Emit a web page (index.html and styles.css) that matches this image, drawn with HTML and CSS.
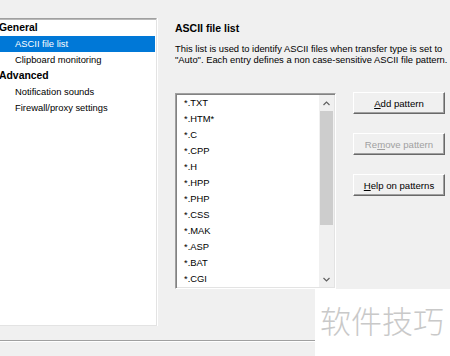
FILE: index.html
```html
<!DOCTYPE html>
<html lang="en">
<head>
    <meta charset="UTF-8">
    <meta name="viewport" content="width=device-width, initial-scale=1.0">
    <title>Options - ASCII file list</title>
    <link rel="stylesheet" href="styles.css">
</head>
<body>
    <div class="dialog">
        <div class="main">
            <div class="tree">
                <div class="node group">General</div>
                <div class="node child selected">ASCII file list</div>
                <div class="node child">Clipboard monitoring</div>
                <div class="node group">Advanced</div>
                <div class="node child">Notification sounds</div>
                <div class="node child">Firewall/proxy settings</div>
            </div>

            <div class="page">
                <h2>ASCII file list</h2>
                <p class="desc">This list is used to identify ASCII files when transfer type is set to<br>"Auto". Each entry defines a non case-sensitive ASCII file pattern.</p>

                <div class="content">
                    <div class="listbox">
                        <ul class="items">
                            <li>*.TXT</li>
                            <li>*.HTM*</li>
                            <li>*.C</li>
                            <li>*.CPP</li>
                            <li>*.H</li>
                            <li>*.HPP</li>
                            <li>*.PHP</li>
                            <li>*.CSS</li>
                            <li>*.MAK</li>
                            <li>*.ASP</li>
                            <li>*.BAT</li>
                            <li>*.CGI</li>
                        </ul>
                        <div class="scrollbar">
                            <div class="arrow">
                                <svg width="7" height="5" viewBox="0 0 7 5"><path d="M0.5 4 L3.5 1 L6.5 4" fill="none" stroke="#606060" stroke-width="1.2"/></svg>
                            </div>
                            <div class="track"><div class="thumb"></div></div>
                            <div class="arrow">
                                <svg width="7" height="5" viewBox="0 0 7 5"><path d="M0.5 1 L3.5 4 L6.5 1" fill="none" stroke="#606060" stroke-width="1.2"/></svg>
                            </div>
                        </div>
                    </div>

                    <div class="buttons">
                        <button class="btn"><u>A</u>dd pattern</button>
                        <button class="btn" disabled>Re<u>m</u>ove pattern</button>
                        <button class="btn"><u>H</u>elp on patterns</button>
                    </div>
                </div>
            </div>
        </div>
        <div class="footer"></div>
    </div>

    <div class="watermark">软件技巧</div>
</body>
</html>
```

FILE: styles.css
```css
* {
    margin: 0;
    padding: 0;
    box-sizing: border-box;
}

body {
    width: 450px;
    height: 356px;
    overflow: hidden;
    position: relative;
    background: #f0f0f0;
    color: #000;
    font-family: 'Liberation Sans', Arial, sans-serif;
    font-size: 9.4px;
}

.dialog {
    display: flex;
    flex-direction: column;
    padding-top: 18px;
}

.main {
    display: flex;
    align-items: flex-start;
}

/* Left navigation tree */
.tree {
    width: 157px;
    height: 308px;
    flex-shrink: 0;
    background: #fff;
    border-top: 1px solid #a0a0a0;
    border-right: 1px solid #e3e3e3;
    border-bottom: 1px solid #e3e3e3;
    box-shadow: inset 0 1px 0 #b9b9b9, 1px 0 0 #fff;
    padding-top: 1px;
    margin-right: 18px;
}

.node {
    height: 16px;
    line-height: 16px;
    white-space: nowrap;
}

.node.group {
    font-weight: bold;
    font-size: 10.4px;
    margin-left: -1px;
}

.node.child {
    padding-left: 15px;
}

.node.selected {
    background: #0078d7;
    color: #fff;
    margin-right: 1px;
}

/* Right settings page */
.page {
    flex: 1;
    white-space: nowrap;
    padding-top: 4px;
}

.page h2 {
    font-size: 10.5px;
    font-weight: bold;
    line-height: 12px;
}

.desc {
    margin-top: 9px;
    line-height: 11px;
}

.content {
    display: flex;
    align-items: flex-start;
    margin-top: 28px;
}

.listbox {
    width: 161px;
    height: 196px;
    display: flex;
    background: #fff;
    border-top: 1px solid #a0a0a0;
    border-left: 1px solid #a0a0a0;
    border-right: 1px solid #fff;
    border-bottom: 1px solid #fff;
    box-shadow: inset 1px 1px 0 #828282, inset -1px -1px 0 #e3e3e3;
    padding: 1px;
}

.items {
    flex: 1;
    list-style: none;
    padding-left: 7px;
    overflow: hidden;
}

.items li {
    height: 16px;
    line-height: 16px;
}

.scrollbar {
    width: 15px;
    display: flex;
    flex-direction: column;
    background: #f0f0f0;
}

.arrow {
    height: 16px;
    display: flex;
    align-items: center;
    justify-content: center;
}

.track {
    flex: 1;
    padding: 0 1px;
}

.thumb {
    height: 114px;
    background: #cdcdcd;
}

.buttons {
    display: flex;
    flex-direction: column;
    gap: 19px;
    margin-left: 17px;
    margin-top: -1px;
}

.btn {
    width: 92px;
    height: 22px;
    font-family: inherit;
    font-size: 9.6px;
    color: #000;
    background: #f0f0f0;
    border-top: 1px solid #fff;
    border-left: 1px solid #fff;
    border-right: 1px solid #696969;
    border-bottom: 1px solid #696969;
    box-shadow: inset -1px -1px 0 #a0a0a0;
}

.btn:disabled {
    color: #a0a0a0;
}

/* Separator above the dialog buttons */
.footer {
    margin-top: 14px;
    height: 2px;
    flex-shrink: 0;
    background: #a0a0a0;
    border-bottom: 1px solid #fff;
}

/* Site watermark pasted over the corner */
.watermark {
    position: absolute;
    left: 315px;
    top: 289px;
    width: 135px;
    height: 67px;
    background: #fff;
    color: #c9c9c9;
    font-family: 'Noto Sans CJK SC', sans-serif;
    font-weight: 300;
    font-size: 31px;
    line-height: 31px;
    padding: 15px 0 0 5px;
}
```
